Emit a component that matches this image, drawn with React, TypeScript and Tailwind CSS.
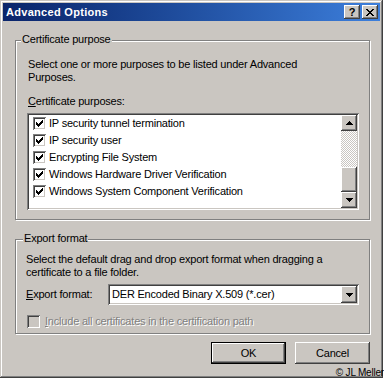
import React from 'react';

/* ─── Bevels (Windows classic) ─── */
const raised = 'shadow-[inset_-1px_-1px_0_#404040,inset_1px_1px_0_#ffffff,inset_-2px_-2px_0_#808080,inset_2px_2px_0_#cac6c1]';
const sunken = 'shadow-[inset_1px_1px_0_#808080,inset_-1px_-1px_0_#ffffff,inset_2px_2px_0_#404040,inset_-2px_-2px_0_#cac6c1]';

const purposes = [
    'IP security tunnel termination',
    'IP security user',
    'Encrypting File System',
    'Windows Hardware Driver Verification',
    'Windows System Component Verification',
];

function Check({ checked = true, disabled = false }: { checked?: boolean; disabled?: boolean }) {
    return (
        <span className={`w-[13px] h-[13px] shrink-0 flex items-center justify-center ${disabled ? 'bg-[#cac6c1]' : 'bg-white'} ${sunken}`}>
            {checked && (
                <svg width="7" height="7" viewBox="0 0 7 7" shapeRendering="crispEdges">
                    <path d="M6 0h1v3h-1v1h-1v1h-1v1h-1v1h-1v-1h-1v-1h-1v-3h1v1h1v1h1v-1h1v-1h1z" fill="#000" />
                </svg>
            )}
        </span>
    );
}

function Arrow({ dir }: { dir: 'up' | 'down' }) {
    return (
        <svg width="7" height="4" viewBox="0 0 7 4" shapeRendering="crispEdges">
            {dir === 'down'
                ? <path d="M0 0h7v1h-1v1h-1v1h-1v1h-1v-1h-1v-1h-1v-1h-1z" fill="#000" />
                : <path d="M3 0h1v1h1v1h1v1h1v1h-7v-1h1v-1h1v-1h1z" fill="#000" />}
        </svg>
    );
}

function ScrollButton({ dir }: { dir: 'up' | 'down' }) {
    return (
        <div className={`w-[16px] h-[16px] bg-[#cac6c1] flex items-center justify-center ${raised}`}>
            <Arrow dir={dir} />
        </div>
    );
}

function GroupLabel({ children, offset }: { children: React.ReactNode; offset: string }) {
    return (
        <span className={`self-start -mt-[8px] ${offset} px-[1px] bg-[#cac6c1] leading-[13px]`}>{children}</span>
    );
}

export default function App() {
    return (
        <div className="w-[384px] h-[379px] bg-white relative font-['Liberation_Sans',Arial,sans-serif] text-[11px] leading-[13px] tracking-[-0.2px] text-black">
            <div className="w-[383px] h-[378px] bg-[#cac6c1] p-[3px] flex flex-col shadow-[inset_-1px_-1px_0_#404040,inset_1px_1px_0_#cac6c1,inset_-2px_-2px_0_#808080,inset_2px_2px_0_#ffffff]">

                {/* Title bar */}
                <div className="h-[18px] flex items-center pl-[3px] pr-[2px] bg-gradient-to-r from-[#0a246a] to-[#3d7fdc]">
                    <span className="text-white font-bold text-[11px] tracking-[0.3px] flex-1">Advanced Options</span>
                    <div className="flex gap-[2px]">
                        <div className={`w-[16px] h-[14px] bg-[#cac6c1] flex items-center justify-center ${raised}`}>
                            <span className="font-bold text-[11px] leading-none">?</span>
                        </div>
                        <div className={`w-[16px] h-[14px] bg-[#cac6c1] flex items-center justify-center ${raised}`}>
                            <svg width="8" height="7" viewBox="0 0 8 7" shapeRendering="crispEdges">
                                <path d="M0 0h2v1h1v1h2v-1h1v-1h2v1h-1v1h-1v1h-1v1h1v1h1v1h1v1h-2v-1h-1v-1h-2v1h-1v1h-2v-1h1v-1h1v-1h1v-1h-1v-1h-1v-1h-1z" fill="#000" />
                            </svg>
                        </div>
                    </div>
                </div>

                <div className="flex flex-col pl-[12px] pr-[10px]">

                    {/* Certificate purpose */}
                    <div className="mt-[19px] flex flex-col border border-[#808080] shadow-[inset_1px_1px_0_#ffffff,1px_1px_0_#ffffff] pl-[11px] pr-[10px] pb-[9px]">
                        <GroupLabel offset="-ml-[6px]">Certificate purpose</GroupLabel>
                        <p className="mt-[12px] pl-[1px]">
                            Select one or more purposes to be listed under Advanced<br />Purposes.
                        </p>
                        <p className="mt-[11px] pl-[1px]"><span className="underline">C</span>ertificate purposes:</p>

                        <div className={`mt-[5px] h-[97px] bg-white p-[2px] flex ${sunken}`}>
                            <div className="flex-1 flex flex-col pl-[4px]">
                                {purposes.map((p) => (
                                    <div key={p} className="h-[17px] flex items-center gap-[3px]">
                                        <Check />
                                        <span>{p}</span>
                                    </div>
                                ))}
                            </div>
                            <div className="w-[16px] flex flex-col">
                                <ScrollButton dir="up" />
                                <div className="flex-1 flex flex-col justify-end bg-[repeating-conic-gradient(#ffffff_0%_25%,#cac6c1_0%_50%)] bg-[length:2px_2px]">
                                    <div className={`h-[25px] bg-[#cac6c1] ${raised}`} />
                                </div>
                                <ScrollButton dir="down" />
                            </div>
                        </div>
                    </div>

                    {/* Export format */}
                    <div className="mt-[19px] flex flex-col border border-[#808080] shadow-[inset_1px_1px_0_#ffffff,1px_1px_0_#ffffff] pl-[10px] pr-[10px] pb-[5px]">
                        <GroupLabel offset="-ml-[3px]">Export format</GroupLabel>
                        <p className="mt-[8px]">
                            Select the default drag and drop export format when dragging a<br />certificate to a file folder.
                        </p>
                        <div className="mt-[5px] flex items-center">
                            <span className="w-[82px]"><span className="underline">E</span>xport format:</span>
                            <div className={`flex-1 h-[21px] bg-white p-[2px] flex items-center ${sunken}`}>
                                <span className="flex-1 pl-[2px]">DER Encoded Binary X.509 (*.cer)</span>
                                <div className={`w-[16px] h-[17px] bg-[#cac6c1] flex items-center justify-center ${raised}`}>
                                    <Arrow dir="down" />
                                </div>
                            </div>
                        </div>
                        <div className="mt-[10px] flex items-center gap-[5px] pl-[1px]">
                            <Check checked={false} disabled />
                            <span className="text-[#808080] [text-shadow:1px_1px_0_#ffffff]">
                                <span className="underline">I</span>nclude all certificates in the certification path
                            </span>
                        </div>
                    </div>

                    {/* Buttons */}
                    <div className="mt-[8px] flex justify-end gap-[9px]">
                        <button className="w-[75px] h-[22px] border border-black bg-[#cac6c1] flex items-center justify-center">
                            <span className={`w-full h-full flex items-center justify-center ${raised}`}>OK</span>
                        </button>
                        <button className={`w-[75px] h-[22px] bg-[#cac6c1] flex items-center justify-center ${raised}`}>Cancel</button>
                    </div>
                </div>
            </div>

            {/* Watermark */}
            <span className="absolute right-0 top-[367px] text-[10px] leading-[12px] tracking-[-0.2px]">© JL Meller</span>
        </div>
    );
}
